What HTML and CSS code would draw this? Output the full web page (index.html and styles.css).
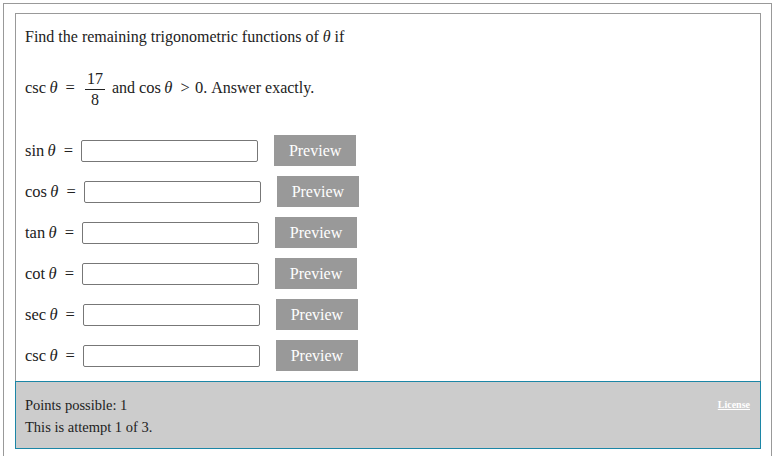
FILE: index.html
```html
<!DOCTYPE html>
<html>
<head>
<meta charset="utf-8">
<link rel="stylesheet" href="styles.css">
</head>
<body>
<div class="outer">
  <div class="question">
    <p class="intro">Find the remaining trigonometric functions of <i class="th">θ</i> if</p>
    <p class="given"><span class="m">csc&thinsp;<i class="th">θ</i> <span class="eq">=</span></span> <span class="frac"><span class="num">17</span><span class="den">8</span></span> and <span class="m">cos&thinsp;<i class="th">θ</i> <span class="eq">&gt;</span> 0</span>. Answer exactly.</p>
    <div class="rows">
      <div class="row"><span class="lbl">sin&thinsp;<i class="th">θ</i> <span class="eq">=</span></span><input class="ans" type="text"><button class="prev">Preview</button></div>
      <div class="row"><span class="lbl">cos&thinsp;<i class="th">θ</i> <span class="eq">=</span></span><input class="ans" type="text"><button class="prev">Preview</button></div>
      <div class="row"><span class="lbl">tan&thinsp;<i class="th">θ</i> <span class="eq">=</span></span><input class="ans" type="text"><button class="prev">Preview</button></div>
      <div class="row"><span class="lbl">cot&thinsp;<i class="th">θ</i> <span class="eq">=</span></span><input class="ans" type="text"><button class="prev">Preview</button></div>
      <div class="row"><span class="lbl">sec&thinsp;<i class="th">θ</i> <span class="eq">=</span></span><input class="ans" type="text"><button class="prev">Preview</button></div>
      <div class="row"><span class="lbl">csc&thinsp;<i class="th">θ</i> <span class="eq">=</span></span><input class="ans" type="text"><button class="prev">Preview</button></div>
    </div>
  </div>
  <div class="footer">
    <div class="info">
      <p>Points possible: 1</p>
      <p>This is attempt 1 of 3.</p>
    </div>
    <a class="license" href="#">License</a>
  </div>
</div>
</body>
</html>
```
FILE: styles.css
```css
html, body {
  margin: 0;
  padding: 0;
  background: #fff;
}
body {
  font-family: "Liberation Serif", "Times New Roman", serif;
  font-size: 16px;
  color: #222;
}
.outer {
  margin: 3px 5px 0 3px;
  border: 1px solid #999;
  border-bottom: none;
  padding: 9px 10px 20px 11px;
}
.question {
  border: 1px solid #999;
  border-bottom: none;
  padding: 13px 9px 10px 9px;
}
.intro {
  margin: 0 0 23px 0;
  line-height: 20px;
}
.th {
  font-style: italic;
}
.m {
  font-size: 16.5px;
}
.eq {
  margin-left: 4px;
  margin-right: 1px;
}
.given {
  margin: 0 0 27px 0;
  line-height: 20px;
}
.frac {
  display: inline-flex;
  flex-direction: column;
  align-items: center;
  vertical-align: 9px;
  margin: 0 3px 0 5px;
  font-size: 16px;
  line-height: 17px;
}
.num {
  border-bottom: 1px solid #222;
  padding: 0 2px 2px;
}
.den {
  padding-top: 1px;
}
.rows {
  display: flex;
  flex-direction: column;
  gap: 10px;
}
.row {
  display: flex;
  align-items: center;
  height: 31px;
}
.lbl {
  white-space: nowrap;
  margin-right: 7px;
  font-size: 16.5px;
}
.ans {
  width: 177px;
  height: 22px;
  box-sizing: border-box;
  border: 1px solid #777;
  border-radius: 2px;
  margin: 0;
  padding: 0 3px;
}
.prev {
  margin-left: 16px;
  width: 82px;
  height: 31px;
  border: none;
  background: #999;
  color: #fff;
  font-family: "Liberation Serif", "Times New Roman", serif;
  font-size: 16px;
  padding: 0;
  cursor: pointer;
}
.footer {
  background: #ccc;
  border: 1px solid #1c86a6;
  display: flex;
  justify-content: space-between;
  align-items: flex-start;
  padding: 12px 10px 10px 9px;
  font-size: 14.5px;
}
.info p {
  margin: 0;
  line-height: 22px;
}
.license {
  color: #fff;
  font-size: 10px;
  font-weight: bold;
  margin-top: 5px;
}
```
